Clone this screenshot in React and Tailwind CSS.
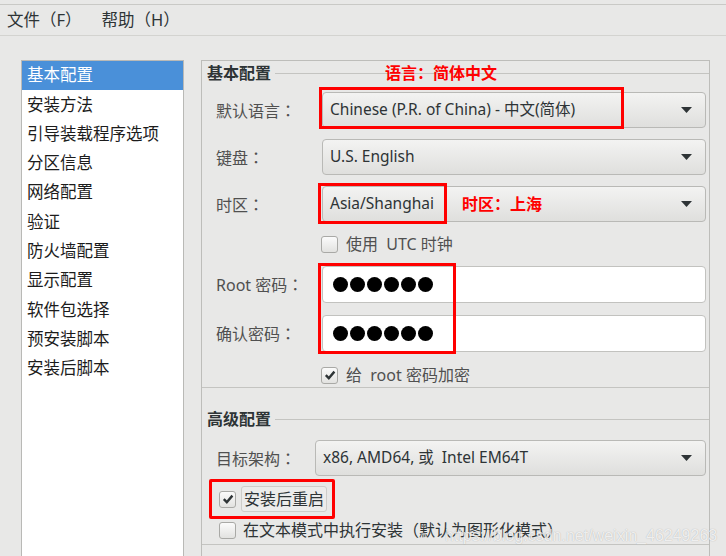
import React from "react";

const items = [
  "基本配置",
  "安装方法",
  "引导装载程序选项",
  "分区信息",
  "网络配置",
  "验证",
  "防火墙配置",
  "显示配置",
  "软件包选择",
  "预安装脚本",
  "安装后脚本",
];

const Arrow = () => (
  <svg width="11" height="6" viewBox="0 0 11 6">
    <polygon points="0,0 11,0 5.5,6" fill="#2e3436" />
  </svg>
);

const Combo = ({ children, className = "" }) => (
  <div
    className={`h-[36px] flex items-center justify-between pl-[7px] pr-[13px] rounded-[4px] border border-[#b9b9b6] bg-linear-to-b from-[#f3f3f2] to-[#dfdfdd] text-[15.5px] text-[#2e3436] ${className}`}
  >
    <span>{children}</span>
    <Arrow />
  </div>
);

const Check = ({ checked }) => (
  <span className="w-[17px] h-[17px] rounded-[3px] border border-[#a9a9a6] bg-linear-to-b from-[#fbfbfb] to-[#e2e2e0] flex items-center justify-center shrink-0">
    {checked && (
      <svg width="12" height="12" viewBox="0 0 12 12">
        <path d="M1.8 6.2 L4.8 9.2 L10.4 2.6" fill="none" stroke="#2e3436" strokeWidth="2.4" />
      </svg>
    )}
  </span>
);

const Dots = () => (
  <div className="flex gap-[2px]">
    {[0, 1, 2, 3, 4, 5].map((i) => (
      <span key={i} className="w-[15px] h-[15px] rounded-full bg-black" />
    ))}
  </div>
);

const Entry = () => (
  <div className="w-[384px] h-[37px] flex items-center pl-[10px] bg-white border border-[#c2c2bf] rounded-[4px]">
    <Dots />
  </div>
);

// field label, the colon is centred in its cell as in the original toolkit
const Label = ({ children, w = "w-[106px]" }) => (
  <span className={`${w} text-[16px] text-[#505050] shrink-0`}>
    {children}
    <span className="font-['Noto_Sans_CJK_JP',sans-serif]">：</span>
  </span>
);

const FrameHead = ({ children }) => (
  <div className="h-[24px] flex items-center">
    <span className="pl-[5px] pr-[4px] text-[16px] font-bold text-[#2e3436]">{children}</span>
    <div className="flex-1 h-px bg-[#c4c4c1]" />
  </div>
);

export default function App() {
  return (
    <div className="w-[726px] h-[556px] bg-[#e8e8e7] overflow-hidden relative font-['Noto_Sans','Noto_Sans_CJK_SC',sans-serif]">
      <div className="h-[5px] border-b border-[#c9c9c6]" />
      <div className="h-[31px] border-b border-[#d3d3d0] flex items-center text-[16.5px] text-[#2e3436]">
        <span className="ml-[7px]">文件（F）</span>
        <span className="ml-[20px]">帮助（H）</span>
      </div>

      <div className="flex mt-[24px]">
        {/* side list */}
        <div className="ml-[21px] w-[163px] h-[500px] bg-white border border-[#b9b9b6] text-[16.5px] text-[#1c1c1c]">
          {items.map((t, i) => (
            <div
              key={t}
              className={`h-[29.3px] flex items-center pl-[5px] ${i === 0 ? "bg-[#4a90d9] text-white" : ""}`}
            >
              {t}
            </div>
          ))}
        </div>

        {/* settings */}
        <div className="ml-[17px] w-[509px] h-[500px] border-l border-t border-r border-[#bdbdba]">
          {/* basic */}
          <div className="border-b border-[#c4c4c1] pb-[2px]">
            <FrameHead>基本配置</FrameHead>
            <div className="mt-[7px] flex items-center pl-[14px]">
              <Label>默认语言</Label>
              <Combo className="w-[384px]">Chinese (P.R. of China) - 中文(简体)</Combo>
            </div>
            <div className="mt-[11px] flex items-center pl-[14px]">
              <Label>键盘</Label>
              <Combo className="w-[384px]">U.S. English</Combo>
            </div>
            <div className="mt-[11px] flex items-center pl-[14px]">
              <Label>时区</Label>
              <Combo className="w-[384px]">Asia/Shanghai</Combo>
            </div>
            <div className="mt-[12px] h-[20px] flex items-center pl-[119px] gap-[8px] text-[16px] text-[#505050]">
              <Check />
              <span>使用&nbsp; UTC 时钟</span>
            </div>
            <div className="mt-[12px] flex items-center pl-[14px]">
              <Label>Root 密码</Label>
              <Entry />
            </div>
            <div className="mt-[12px] flex items-center pl-[14px]">
              <Label>确认密码</Label>
              <Entry />
            </div>
            <div className="mt-[13px] h-[20px] flex items-center pl-[119px] gap-[8px] text-[16px] text-[#505050]">
              <Check checked />
              <span>给&nbsp; root 密码加密</span>
            </div>
          </div>

          {/* advanced */}
          <div className="mt-[19px] border-b border-[#c4c4c1] pb-[4px]">
            <FrameHead>高级配置</FrameHead>
            <div className="mt-[9px] flex items-center pl-[14px]">
              <Label w="w-[99px]">目标架构</Label>
              <Combo className="w-[391px]">x86, AMD64, 或&nbsp; Intel EM64T</Combo>
            </div>
            <div className="mt-[10px] h-[26px] flex items-center pl-[17px] gap-[5px] text-[16px] text-[#2e3436]">
              <Check checked />
              <span className="h-[26px] flex items-center px-[2px] border border-[#cdcdca] rounded-[3px] bg-[#ececeb]">
                安装后重启
              </span>
            </div>
            <div className="mt-[8px] h-[20px] flex items-center pl-[17px] gap-[7px] text-[16px] text-[#2e3436]">
              <Check />
              <span>在文本模式中执行安装（默认为图形化模式）</span>
            </div>
          </div>
        </div>
      </div>

      {/* annotations */}
      <div className="absolute left-[385px] top-[62px] text-[16px] font-bold text-[#ff0000] leading-[22px]">
        语言：简体中文
      </div>
      <div className="absolute left-[462px] top-[193px] text-[16px] font-bold text-[#ff0000] leading-[22px]">
        时区：上海
      </div>
      <div className="absolute left-[319px] top-[87px] w-[305px] h-[42px] border-[3px] border-[#ff0000]" />
      <div className="absolute left-[318px] top-[183px] w-[129px] h-[41px] border-[3px] border-[#ff0000]" />
      <div className="absolute left-[318px] top-[263px] w-[138px] h-[91px] border-[3px] border-[#ff0000]" />
      <div className="absolute left-[209px] top-[479px] w-[126px] h-[40px] border-[3px] border-[#ff0000] rounded-[2px]" />

      <div className="absolute left-[445px] top-[524px] text-[16px] text-white/80 font-['Liberation_Sans',sans-serif] [text-shadow:0_0_1px_rgba(0,0,0,0.3)]">
        https://blog.csdn.net/weixin_46249263
      </div>
    </div>
  );
}
